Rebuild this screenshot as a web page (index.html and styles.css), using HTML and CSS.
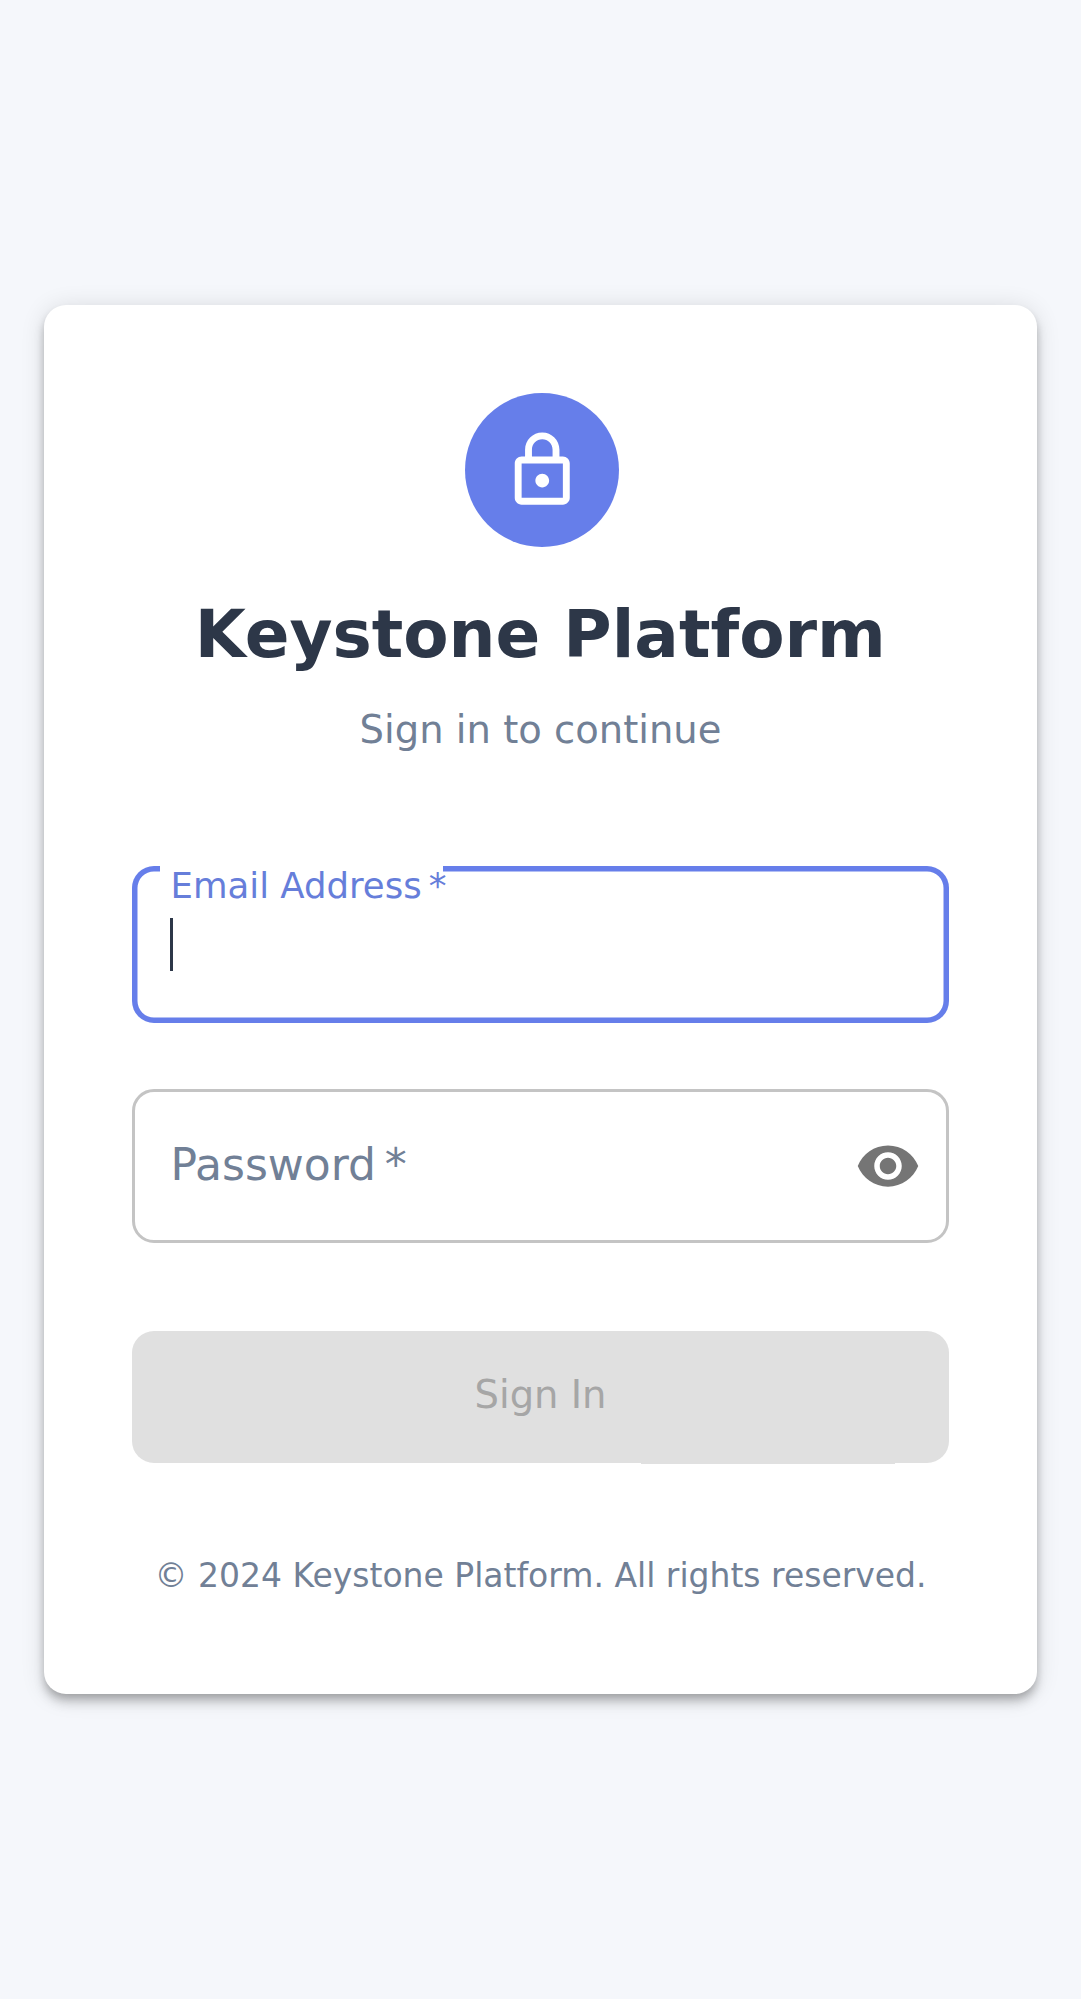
FILE: index.html
```html
<!DOCTYPE html>
<html lang="en">
<head>
<meta charset="utf-8">
<title>Keystone Platform</title>
<link rel="stylesheet" href="styles.css">
</head>
<body>
<main class="card">
  <header class="header">
    <div class="logo">
      <svg class="lock" viewBox="0 0 24 24" aria-hidden="true"><path d="M12 17c1.100 0 2-.9 2-2s-.9-2-2-2-2 .9-2 2 .9 2 2 2zm6-9h-1V6c0-2.760-2.240-5-5-5S7 3.240 7 6v2H6c-1.100 0-2 .9-2 2v10c0 1.100.9 2 2 2h12c1.100 0 2-.9 2-2V10c0-1.100-.9-2-2-2zM9 6c0-1.660 1.340-3 3-3s3 1.340 3 3v2H9V6zm9 14H6V10h12v10z"/></svg>
    </div>
    <h1 class="title">Keystone Platform</h1>
    <p class="subtitle">Sign in to continue</p>
  </header>
  <form class="form">
    <div class="field field-focused">
      <span class="notch"></span>
      <label class="label-floating">Email Address<span class="required">&thinsp;*</span></label>
      <span class="caret"></span>
    </div>
    <div class="field field-password">
      <label class="label">Password<span class="required">&thinsp;*</span></label>
      <svg class="eye" viewBox="0 0 24 24" aria-hidden="true"><path d="M12 4.500C7 4.500 2.730 7.610 1 12c1.730 4.390 6 7.500 11 7.500s9.270-3.110 11-7.500c-1.730-4.390-6-7.500-11-7.500zM12 17c-2.760 0-5-2.240-5-5s2.240-5 5-5 5 2.240 5 5-2.240 5-5 5zm0-8c-1.660 0-3 1.340-3 3s1.340 3 3 3 3-1.340 3-3-1.340-3-3-3z"/></svg>
    </div>
    <button class="submit" type="button" disabled>Sign In</button>
  </form>
  <footer class="footer">© 2024 Keystone Platform. All rights reserved.</footer>
</main>
</body>
</html>
```
FILE: styles.css
```css
* { box-sizing: border-box; }

body {
  margin: 0;
  padding: 0 44px;
  min-height: 1999px;
  display: flex;
  align-items: center;
  background: #f5f7fb;
  font-family: "DejaVu Sans", sans-serif;
  color: #2d3748;
}

.card {
  width: 993px;
  height: 1389px;
  padding: 88px;
  border-radius: 22px;
  background: #fff;
  box-shadow: 0 5.5px 8.25px -2.75px rgba(0, 0, 0, .2), 0 8.25px 11px rgba(0, 0, 0, .14), 0 2.75px 24px rgba(0, 0, 0, .12);
}

.header {
  display: flex;
  flex-direction: column;
  align-items: center;
  height: 473px;
}

.logo {
  width: 154px;
  height: 154px;
  margin-left: 2px;
  display: flex;
  align-items: center;
  justify-content: center;
  border-radius: 50%;
  background: #667eea;
}

.lock { width: 82.5px; height: 82.5px; margin-left: .5px; fill: #fff; }

.title {
  margin: 44px .5px 0 0;
  font-size: 66px;
  line-height: 88px;
  font-weight: 700;
  white-space: nowrap;
}

.subtitle {
  margin: 23px 0 0;
  font-size: 38.5px;
  line-height: 55px;
  color: #718096;
}

.form { display: flex; flex-direction: column; }

.field {
  position: relative;
  width: 817px;
  border-radius: 22px;
}

.field-focused {
  height: 157px;
  box-shadow: inset 0 0 0 5.5px #667eea;
}

.field-password {
  height: 154px;
  margin-top: 66px;
  padding: 0 25px 0 35.5px;
  border: 3px solid #c4c4c4;
  display: flex;
  align-items: center;
  justify-content: space-between;
}

/* Gap in the outline behind the floating label */
.notch {
  position: absolute;
  top: 0;
  left: 28px;
  width: 283px;
  height: 6px;
  background: #fff;
}

.label-floating {
  position: absolute;
  top: -2px;
  left: 38.5px;
  font-size: 35.5px;
  line-height: 43px;
  color: #667eda;
  white-space: nowrap;
}

.caret {
  position: absolute;
  top: 52px;
  left: 38px;
  width: 3px;
  height: 53px;
  background: #2d3748;
}

.label {
  padding-bottom: 4px;
  font-size: 44px;
  color: #718096;
  white-space: nowrap;
}

.eye { width: 66px; height: 66px; fill: #757575; }

.submit {
  position: relative;
  width: 817px;
  height: 132px;
  margin: 88px 0 0;
  padding: 0 0 6px;
  border: 0;
  border-radius: 22px;
  background: #e0e0e0;
  color: #a6a6a6;
  font: 38.5px "DejaVu Sans", sans-serif;
}

/* Hairline along the lower edge */
.submit::after {
  content: "";
  position: absolute;
  left: 509px;
  bottom: -1px;
  width: 254px;
  height: 1px;
  background: #e0e0e0;
}

.footer {
  margin-top: 88px;
  font-size: 33px;
  line-height: 50px;
  text-align: center;
  color: #718096;
  white-space: nowrap;
}
```
